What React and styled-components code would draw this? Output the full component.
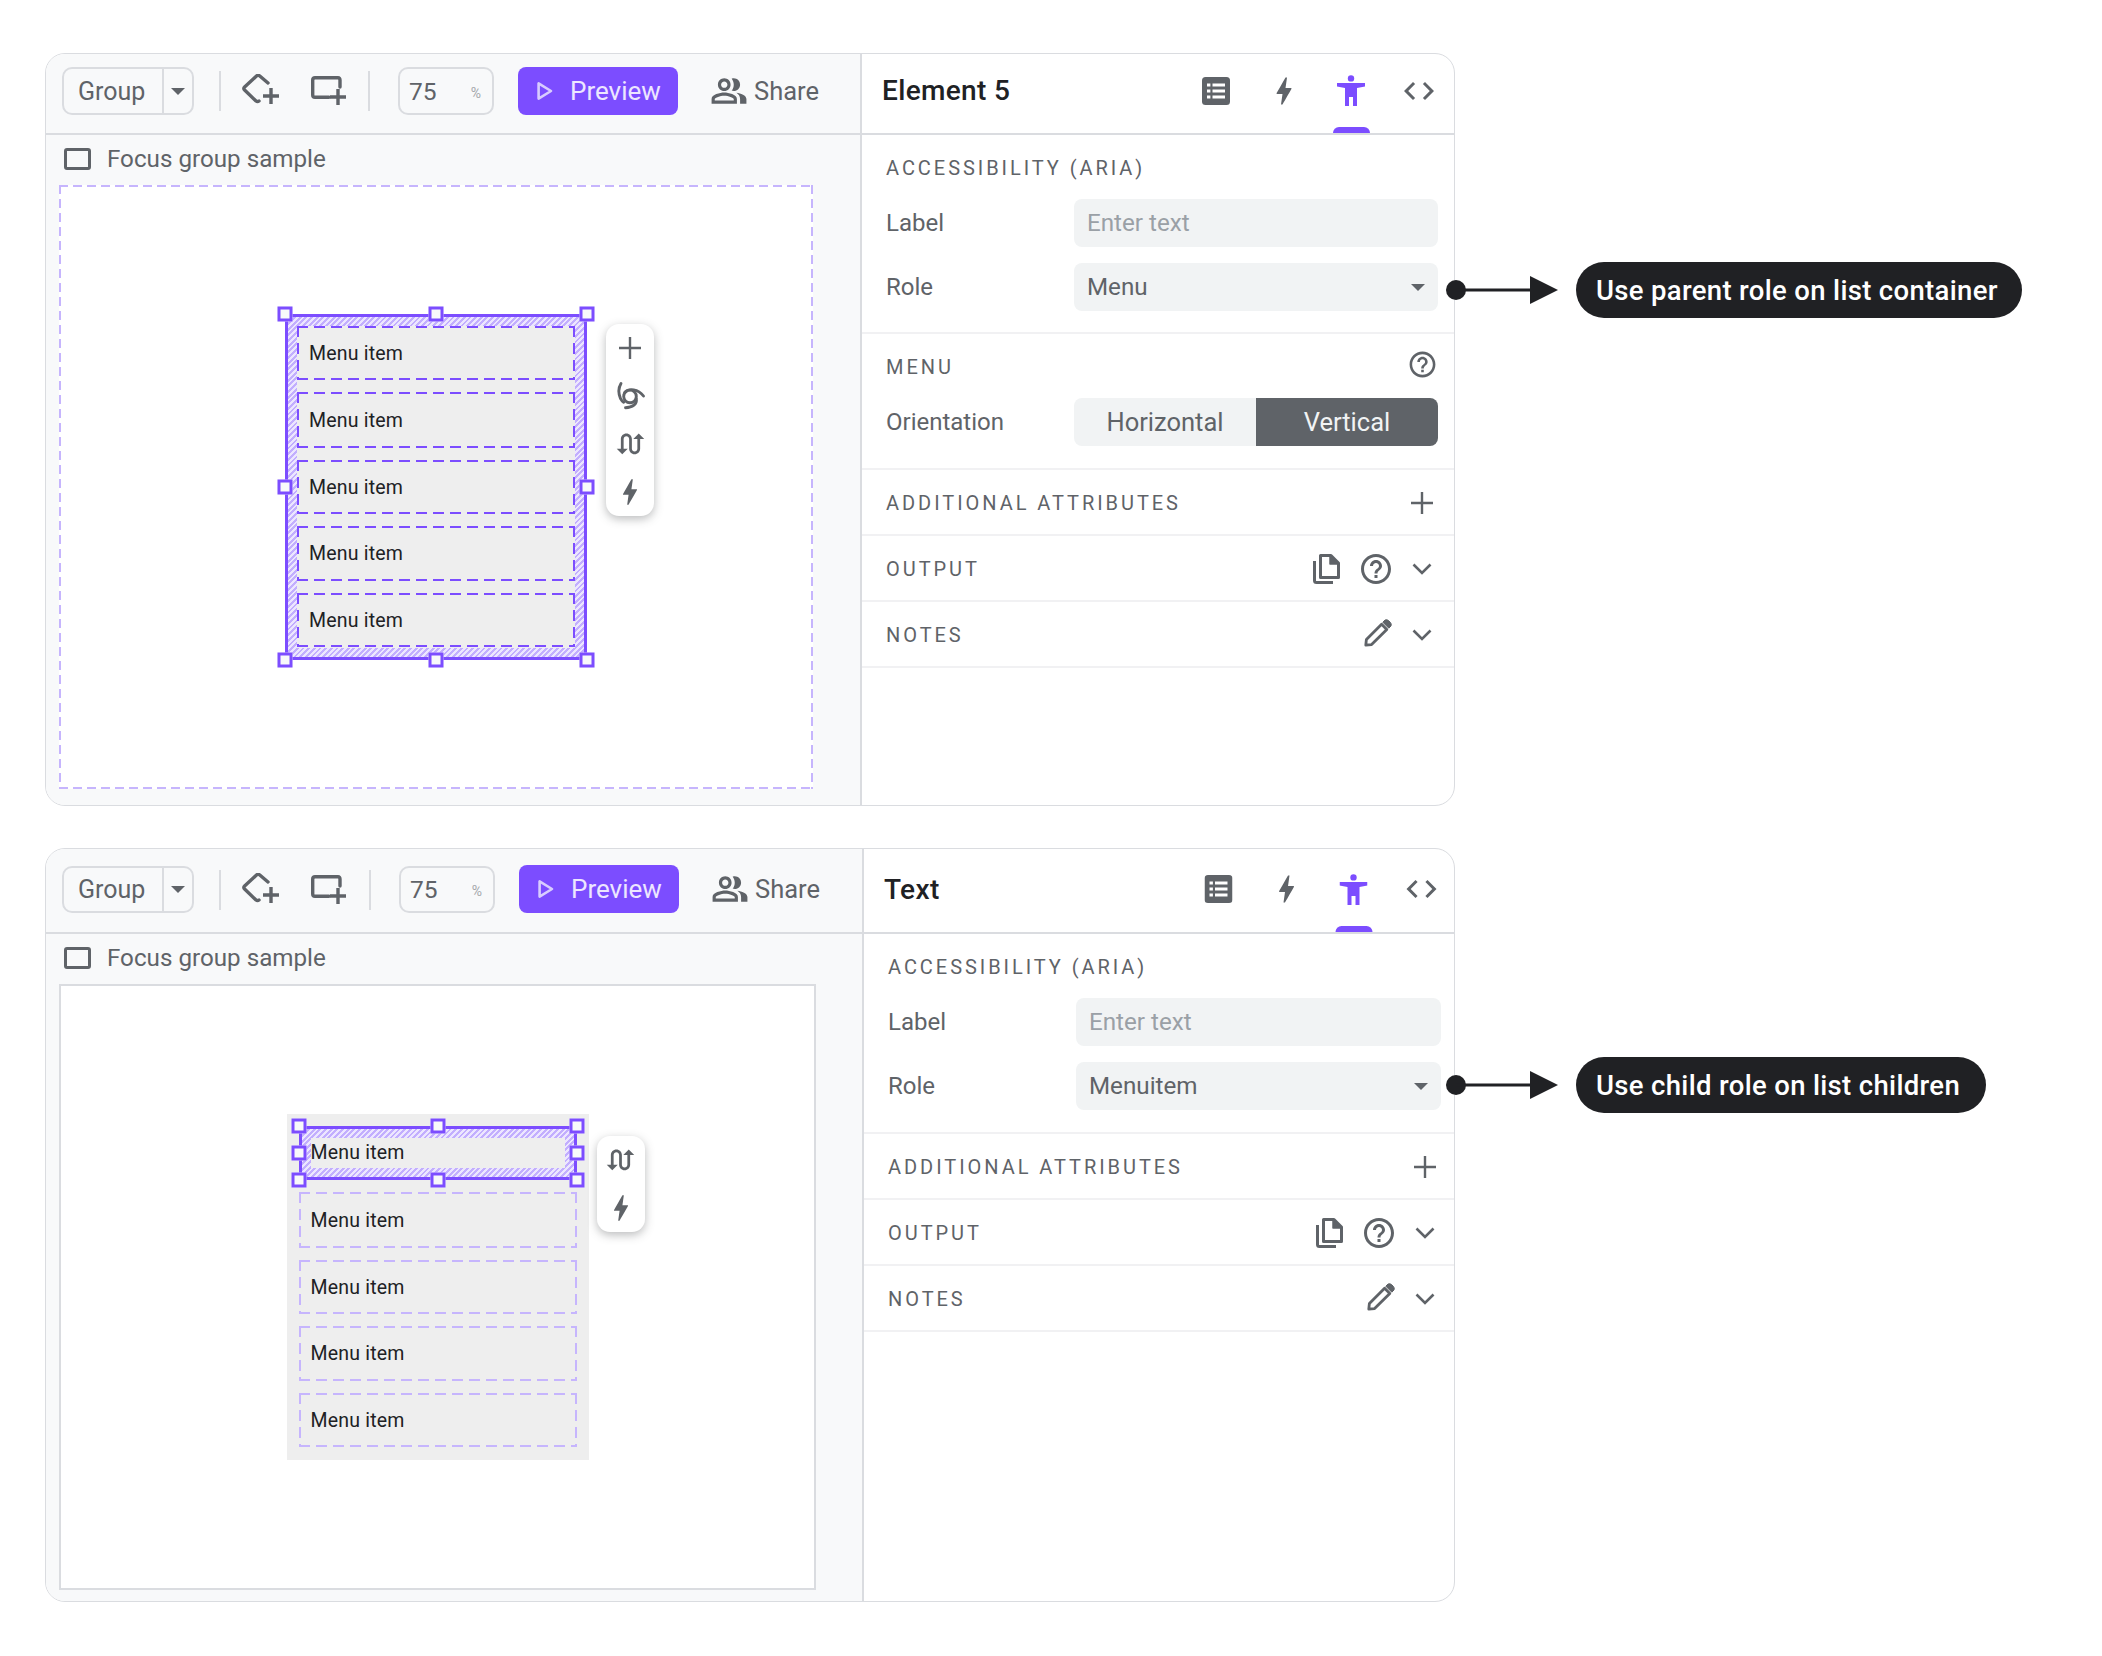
import React from "react";
import styled, { createGlobalStyle, css } from "styled-components";

const purple = "#7c4dff";
const lilac = "#c6b5fd";
const grey = "#5f6368";
const line = "#dadce0";
const softLine = "#f1f1f3";

const Global = createGlobalStyle`
  html, body { margin: 0; padding: 0; background: #fff; }
  body { font-family: Roboto, "Liberation Sans", sans-serif; color: ${grey}; width: 2102px; height: 1656px; overflow: hidden; }
  * { box-sizing: border-box; }
`;

const dashed = (c, w, d, g) => css`
  background-image:
    linear-gradient(to right, ${c} ${d}px, transparent ${d}px),
    linear-gradient(to right, ${c} ${d}px, transparent ${d}px),
    linear-gradient(to bottom, ${c} ${d}px, transparent ${d}px),
    linear-gradient(to bottom, ${c} ${d}px, transparent ${d}px);
  background-size: ${d + g}px ${w}px, ${d + g}px ${w}px, ${w}px ${d + g}px, ${w}px ${d + g}px;
  background-position: 0 0, 0 100%, 0 0, 100% 0;
  background-repeat: repeat-x, repeat-x, repeat-y, repeat-y;
`;

const hatch = css`
  background-image: repeating-linear-gradient(135deg, #c2aefe 0 2px, #ece6ff 2px 4px);
`;

const Page = styled.main`
  padding: 53px 0 0 45px;
  display: flex;
  flex-direction: column;
  gap: 42px;
`;

const Panel = styled.section`
  position: relative;
  width: 1410px;
  height: ${(p) => p.$height}px;
  display: flex;
  background: #fff;
  border: 1px solid ${line};
  border-radius: 20px;
`;

const LeftPane = styled.div`
  width: ${(p) => p.$width}px;
  flex: none;
  display: flex;
  flex-direction: column;
  background: #f8f9fa;
  border-right: 2px solid ${line};
  border-radius: 19px 0 0 19px;
  padding-bottom: ${(p) => p.$bottom}px;
`;

const Toolbar = styled.div`
  height: ${(p) => p.$height}px;
  flex: none;
  display: flex;
  align-items: flex-start;
  padding: ${(p) => p.$top}px 0 0 16px;
  border-bottom: 2px solid ${line};
`;

const GroupSelect = styled.div`
  width: 132px;
  height: ${(p) => p.$h}px;
  display: flex;
  border: 2px solid ${line};
  border-radius: 10px;
  font-size: 25px;
`;

const GroupName = styled.span`
  width: 100px;
  display: flex;
  align-items: center;
  padding-left: 14px;
  border-right: 2px solid ${line};
`;

const GroupCaret = styled.span`
  flex: 1;
  display: flex;
  align-items: center;
  justify-content: center;
`;

const Caret = styled.span`
  width: 0;
  height: 0;
  border-left: 7px solid transparent;
  border-right: 7px solid transparent;
  border-top: 7px solid ${grey};
`;

const ToolDivider = styled.span`
  width: 2px;
  height: 40px;
  margin: 4px ${(p) => p.$after}px 0 ${(p) => p.$before}px;
  background: ${line};
  flex: none;
`;

const ToolIcon = styled.svg`
  flex: none;
  margin: ${(p) => p.$top}px ${(p) => p.$right || 0}px 0 0;
  fill: none;
  stroke: ${grey};
  stroke-width: 3.4;
  stroke-linecap: round;
  stroke-linejoin: round;
`;

const ZoomBox = styled.div`
  width: 96px;
  height: ${(p) => p.$h}px;
  display: flex;
  align-items: center;
  justify-content: space-between;
  padding: 0 11px 0 9px;
  border: 2px solid ${line};
  border-radius: 10px;
  font-size: 24.5px;
  margin-right: 24px;
`;

const Percent = styled.span`
  font-size: 14px;
  color: #a4a7ab;
  margin-top: 3px;
`;

const PreviewButton = styled.button`
  width: 160px;
  height: 48px;
  margin-top: ${(p) => p.$nudge}px;
  display: flex;
  align-items: center;
  padding: 0 0 0 19px;
  gap: 17px;
  border: 0;
  border-radius: 8px;
  background: ${purple};
  color: #ece6ff;
  font: 400 26px Roboto, sans-serif;
`;

const ShareButton = styled.div`
  margin: ${(p) => p.$nudge}px 0 0 32px;
  height: 48px;
  display: flex;
  align-items: center;
  gap: 6px;
  font-size: 25.5px;
`;

const SampleRow = styled.div`
  height: 50px;
  flex: none;
  display: flex;
  align-items: center;
  gap: 16px;
  padding: 0 0 3px 18px;
  font-size: 24.2px;
`;

const CheckBox = styled.span`
  width: 27px;
  height: 22px;
  border: 3px solid ${grey};
  border-radius: 3px;
  flex: none;
`;

const Canvas = styled.div`
  margin-left: 13px;
  width: ${(p) => p.$width}px;
  flex: 1;
  display: flex;
  align-items: center;
  justify-content: center;
  background-color: #fff;
  ${(p) => (p.$focused ? dashed(lilac, 2, 9, 5) : css`border: 2px solid ${line};`)}
`;

const MenuFrame = styled.div`
  position: relative;
  width: 302px;
  height: 346px;
  padding: 12px 12px;
  display: flex;
  flex-direction: column;
  gap: 12px;
  background-color: #eeeeee;
  ${(p) =>
    p.$selected &&
    css`
      border: 3px solid ${purple};
      padding: 9px;
      &::before {
        content: "";
        position: absolute;
        inset: 0;
        border: 9px solid transparent;
        ${hatch}
        background-origin: border-box;
        -webkit-mask: linear-gradient(#000 0 0) border-box, linear-gradient(#000 0 0) padding-box;
        -webkit-mask-composite: xor;
        mask-composite: exclude;
      }
    `}
`;

const MenuItem = styled.div`
  position: relative;
  flex: none;
  height: ${(p) => p.$h}px;
  display: flex;
  align-items: center;
  padding-left: 12px;
  font-size: 19.5px;
  letter-spacing: 0.2px;
  color: #202124;
  ${(p) => dashed(p.$strong ? purple : lilac, 2, 11, 6)}
`;

const SelectedItem = styled.div`
  position: relative;
  flex: none;
  height: ${(p) => p.$h}px;
  padding: 9px 9px;
  border: 3px solid ${purple};
  font-size: 19.5px;
  letter-spacing: 0.2px;
  color: #202124;
  ${hatch}
`;

const SelectedText = styled.div`
  height: 30px;
  line-height: 30px;
  background: #eeeeee;
`;

const HandleLayer = styled.div`
  position: absolute;
  inset: -3px;
  pointer-events: none;
`;

const Handle = styled.span`
  position: absolute;
  left: ${(p) => p.$x}%;
  top: ${(p) => p.$y}%;
  width: 15px;
  height: 15px;
  transform: translate(-50%, -50%);
  background: #f8f9fa;
  border: 3px solid ${purple};
  z-index: 2;
`;

const FloatBar = styled.div`
  position: absolute;
  left: calc(100% + ${(p) => p.$gap}px);
  top: ${(p) => p.$top}px;
  width: 48px;
  display: flex;
  flex-direction: column;
  align-items: center;
  background: #fff;
  border-radius: 13px;
  box-shadow: 0 3px 10px rgba(60, 64, 67, 0.35);
`;

const FloatSlot = styled.span`
  width: 48px;
  height: 48px;
  display: flex;
  align-items: center;
  justify-content: center;
`;

const RightPane = styled.div`
  flex: 1;
  min-width: 0;
  display: flex;
  flex-direction: column;
`;

const Header = styled.header`
  height: ${(p) => p.$height}px;
  flex: none;
  display: flex;
  align-items: center;
  padding: 0 0 ${(p) => p.$pb}px 20px;
  border-bottom: 2px solid ${line};
`;

const Title = styled.h2`
  margin: 0;
  flex: 1;
  font-size: 28px;
  font-weight: 500;
  letter-spacing: 0.35px;
  color: #202124;
`;

const TabBar = styled.div`
  display: flex;
  transform: translateX(${(p) => p.$tx}px);
`;

const Tab = styled.span`
  position: relative;
  width: 67.7px;
  height: 40px;
  display: flex;
  align-items: center;
  justify-content: center;
`;

const Indicator = styled.span`
  position: absolute;
  left: 15px;
  bottom: ${(p) => p.$bottom}px;
  width: 37px;
  height: 6px;
  border-radius: 6px 6px 0 0;
  background: ${purple};
`;

const Section = styled.div`
  flex: none;
  height: ${(p) => p.$h}px;
  padding: 0 ${(p) => p.$right}px 0 24px;
  border-bottom: 2px solid ${softLine};
`;

const SectionHead = styled.div`
  height: ${(p) => p.$h}px;
  padding-top: 1.5px;
  display: flex;
  align-items: center;
  justify-content: space-between;
`;

const SectionTitle = styled.span`
  font-size: 20px;
  letter-spacing: 2.95px;
  white-space: nowrap;
`;

const HeadIcons = styled.div`
  display: flex;
  align-items: center;
`;

const HeadSlot = styled.span`
  width: ${(p) => p.$w}px;
  display: flex;
  align-items: center;
  justify-content: center;
  margin: ${(p) => p.$mt || 0}px ${(p) => p.$mr || 0}px 0 0;
`;

const MenuHelp = styled.span`
  display: block;
  margin-top: -5px;
`;

const Row = styled.div`
  height: 48px;
  display: flex;
  align-items: center;
  margin-bottom: 16px;
`;

const RowLabel = styled.span`
  width: 188px;
  flex: none;
  font-size: 24px;
`;

const Field = styled.div`
  flex: 1;
  height: 48px;
  display: flex;
  align-items: center;
  justify-content: space-between;
  padding: 0 13px;
  background: #f1f3f4;
  border-radius: 8px;
  font-size: 24.2px;
  color: ${(p) => (p.$placeholder ? "#9aa0a6" : grey)};
`;

const Segmented = styled.div`
  flex: 1;
  height: 48px;
  display: flex;
  border-radius: 8px;
  overflow: hidden;
  font-size: 25.5px;
`;

const Segment = styled.span`
  flex: 1;
  display: flex;
  align-items: center;
  justify-content: center;
  background: ${(p) => (p.$on ? grey : "#f1f3f4")};
  color: ${(p) => (p.$on ? "#f1f3f4" : grey)};
`;

const Annotation = styled.aside`
  position: absolute;
  left: 1400px;
  top: 208px;
  display: flex;
  align-items: center;
  gap: 18px;
`;

const Pill = styled.div`
  height: 56px;
  padding: 0 ${(p) => p.$pad}px 0 20px;
  display: flex;
  align-items: center;
  background: #202124;
  color: #fff;
  border-radius: 28px;
  font-size: 27.5px;
  font-weight: 500;
  letter-spacing: 0.33px;
  white-space: nowrap;
`;

const I = ({ size, d, color = grey }) => (
  <svg width={size} height={size} viewBox="0 0 24 24" fill={color} style={{ display: "block" }}>
    <path d={d} />
  </svg>
);

const paths = {
  bolt: "M11 21h-1l1-7H7.5c-.88 0-.33-.75-.31-.78C8.48 10.94 10.42 7.54 13.01 3h1l-1 7h3.51c.4 0 .62.19.4.66C12.97 17.55 11 21 11 21z",
  code: "M9.4 16.6L4.8 12l4.6-4.6L8 6l-6 6 6 6 1.4-1.4zm5.2 0l4.6-4.6-4.6-4.6L16 6l6 6-6 6-1.4-1.4z",
  help: "M11 18h2v-2h-2v2zm1-16C6.48 2 2 6.48 2 12s4.48 10 10 10 10-4.48 10-10S17.52 2 12 2zm0 18c-4.41 0-8-3.59-8-8s3.59-8 8-8 8 3.59 8 8-3.59 8-8 8zm0-14c-2.21 0-4 1.79-4 4h2c0-1.1.9-2 2-2s2 .9 2 2c0 2-3 1.75-3 5h2c0-2.25 3-2.5 3-5 0-2.21-1.79-4-4-4z",
  swap: "M18 4l-4 4h3v7c0 1.1-.9 2-2 2s-2-.9-2-2V8c0-2.21-1.79-4-4-4S5 5.79 5 8v7H2l4 4 4-4H7V8c0-1.1.9-2 2-2s2 .9 2 2v7c0 2.21 1.79 4 4 4s4-1.79 4-4V8h3l-4-4z",
  people: "M16.67 13.13C18.04 14.06 19 15.32 19 17v3h4v-3c0-2.18-3.57-3.47-6.33-3.87zM15 12c2.21 0 4-1.79 4-4s-1.79-4-4-4c-.47 0-.91.1-1.33.24C14.5 5.27 15 6.58 15 8s-.5 2.73-1.33 3.76c.42.14.86.24 1.33.24zM9 12c2.21 0 4-1.79 4-4s-1.79-4-4-4-4 1.79-4 4 1.79 4 4 4zm0-6c1.1 0 2 .9 2 2s-.9 2-2 2-2-.9-2-2 .9-2 2-2zm0 7c-2.67 0-8 1.34-8 4v3h16v-3c0-2.66-5.33-4-8-4zm6 5H3v-.99C3.2 16.29 6.3 15 9 15s5.8 1.29 6 2v1z",
};

const ShapePlus = () => (
  <ToolIcon $top={7} $right={31} width="38" height="30" viewBox="0 0 38 30">
    <path d="M26 9 L17.5 1.8 Q16 .8 14.5 2 L2.6 13 Q1 14.5 2.6 16 L14 27 Q15.5 28.2 17 27" />
    <path d="M29 14V30M21 22H37" strokeLinecap="butt" />
  </ToolIcon>
);

const RectPlus = () => (
  <ToolIcon $top={9} width="36" height="30" viewBox="0 0 36 30">
    <path d="M29 11V4Q29 1.7 27 1.7H4Q1.7 1.7 1.7 4V19Q1.7 21.3 4 21.3H18" />
    <path d="M27 13V29M19 21H35" strokeLinecap="butt" />
  </ToolIcon>
);

const PlayIcon = () => (
  <svg width="16" height="20" viewBox="0 0 16 20" fill="none" stroke="#d8ccff" strokeWidth="2.6" style={{ flex: "none" }}>
    <path d="M1.6 2.4V17.6L14 10Z" strokeLinejoin="round" />
  </svg>
);

const ListIcon = () => (
  <svg width="28" height="28" viewBox="0 0 28 28" style={{ display: "block" }}>
    <rect width="28" height="28" rx="3.5" fill={grey} />
    <path d="M5 6.5h3.4v3H5zM5 12.5h3.4v3H5zM5 18.5h3.4v3H5zM10.5 6.5H23v3H10.5zM10.5 12.5H23v3H10.5zM10.5 18.5H23v3H10.5z" fill="#fff" />
  </svg>
);

const PersonIcon = () => (
  <svg width="28" height="31" viewBox="0 0 28 31" fill={purple} style={{ display: "block" }}>
    <circle cx="14" cy="3.4" r="3.2" />
    <path d="M0 8H28V11.5L20 13V31H16V22H12V31H8V13L0 11.5Z" />
  </svg>
);

const CycloneIcon = () => (
  <svg width="36" height="36" viewBox="0 0 40 40" fill="none" stroke={grey} strokeWidth="3.2" strokeLinecap="round" style={{ display: "block" }}>
    <circle cx="20" cy="20.5" r="7" />
    <path d="M10 6C7 11 7 17 9.5 23C10.5 25 11.5 26 13 27" />
    <path d="M14 16C19 11 29 12 35 20" />
    <path d="M27 23C28 29 23 33 15 33" />
  </svg>
);

const CopyIcon = () => (
  <svg width="27" height="30" viewBox="0 0 27 30" fill="none" stroke={grey} strokeWidth="3" strokeLinejoin="round" style={{ display: "block", marginRight: 18 }}>
    <path d="M7.5 1.5H18L25.5 9V23.5H7.5Z" />
    <path d="M17 1.5V10H25.5Z" fill={grey} strokeWidth="1.5" />
    <path d="M1.5 7V26.5Q1.5 28.5 3.5 28.5H20" />
  </svg>
);

const PencilIcon = () => (
  <svg width="28" height="28" viewBox="0 0 28 28" fill="none" stroke={grey} strokeWidth="2.8" strokeLinejoin="round" style={{ display: "block" }}>
    <path d="M1.8 26.2L2.4 20.4L17.6 5.2L22.8 10.4L7.6 25.6Z" />
    <path d="M18.8 3.2L21 1Q23 .2 24.6 1.6L26.4 3.4Q27.8 5 27 7L24.8 9.2Z" fill={grey} strokeWidth="1" />
  </svg>
);

const Chevron = () => (
  <svg width="20" height="12" viewBox="0 0 20 12" fill="none" stroke={grey} strokeWidth="2.6" style={{ display: "block" }}>
    <path d="M1.5 1.5L10 10L18.5 1.5" />
  </svg>
);

const PlusIcon = () => (
  <svg width="22" height="22" viewBox="0 0 22 22" fill="none" stroke={grey} strokeWidth="2.4" style={{ display: "block" }}>
    <path d="M11 0V22M0 11H22" />
  </svg>
);

const Connector = () => (
  <svg width="112" height="28" viewBox="0 0 112 28" style={{ display: "block" }}>
    <ellipse cx="10" cy="14" rx="10" ry="10" fill="#202124" />
    <path d="M10 12.5H86V15.5H10Z" fill="#202124" />
    <path d="M84 0L112 14L84 28Z" fill="#202124" />
  </svg>
);

const HEIGHTS = [54, 56, 54, 55, 54];
const ALL_HANDLES = [[0, 0], [50, 0], [100, 0], [0, 50], [100, 50], [0, 100], [50, 100], [100, 100]];

const Handles = () => (
  <HandleLayer>
    {ALL_HANDLES.map(([x, y]) => <Handle key={`${x}-${y}`} $x={x} $y={y} />)}
  </HandleLayer>
);

const FoldRow = ({ title, right, children }) => (
  <Section $h={66} $right={right}>
    <SectionHead $h={64}>
      <SectionTitle>{title}</SectionTitle>
      <HeadIcons>{children}</HeadIcons>
    </SectionHead>
  </Section>
);

const Editor = ({ v }) => (
  <Panel $height={v.height}>
    <LeftPane $width={v.leftWidth} $bottom={v.leftBottom}>
      <Toolbar $height={v.toolbarH} $top={v.toolTop}>
        <GroupSelect $h={v.ctlH}>
          <GroupName>Group</GroupName>
          <GroupCaret><Caret /></GroupCaret>
        </GroupSelect>
        <ToolDivider $before={25} $after={21} />
        <ShapePlus />
        <RectPlus />
        <ToolDivider $before={v.divBefore} $after={28} />
        <ZoomBox $h={v.ctlH}>
          <span>75</span>
          <Percent>%</Percent>
        </ZoomBox>
        <PreviewButton $nudge={v.nudge}>
          <PlayIcon />
          <span>Preview</span>
        </PreviewButton>
        <ShareButton $nudge={v.nudge}>
          <I size={38} d={paths.people} />
          <span>Share</span>
        </ShareButton>
      </Toolbar>
      <SampleRow>
        <CheckBox />
        <span>Focus group sample</span>
      </SampleRow>
      <Canvas $focused={v.mode === "parent"} $width={v.canvasW}>
        <MenuFrame $selected={v.mode === "parent"}>
          {HEIGHTS.map((h, i) =>
            v.mode === "child" && i === 0 ? (
              <SelectedItem key={i} $h={h}>
                <SelectedText>Menu item</SelectedText>
                <Handles />
              </SelectedItem>
            ) : (
              <MenuItem key={i} $h={h} $strong={v.mode === "parent"}>Menu item</MenuItem>
            )
          )}
          {v.mode === "parent" ? (
            <>
              <Handles />
              <FloatBar $gap={22} $top={7}>
                <FloatSlot><PlusIcon /></FloatSlot>
                <FloatSlot><CycloneIcon /></FloatSlot>
                <FloatSlot><I size={33} d={paths.swap} /></FloatSlot>
                <FloatSlot><I size={34} d={paths.bolt} /></FloatSlot>
              </FloatBar>
            </>
          ) : (
            <FloatBar $gap={8} $top={22}>
              <FloatSlot><I size={33} d={paths.swap} /></FloatSlot>
              <FloatSlot><I size={34} d={paths.bolt} /></FloatSlot>
            </FloatBar>
          )}
        </MenuFrame>
      </Canvas>
    </LeftPane>
    <RightPane>
      <Header $height={v.toolbarH} $pb={v.headerPb}>
        <Title>{v.title}</Title>
        <TabBar $tx={v.tabShift}>
          <Tab><ListIcon /></Tab>
          <Tab><I size={36} d={paths.bolt} /></Tab>
          <Tab>
            <PersonIcon />
            <Indicator $bottom={v.indicator} />
          </Tab>
          <Tab><I size={36} d={paths.code} /></Tab>
        </TabBar>
      </Header>
      <Section $h={v.ariaH} $right={v.fieldRight}>
        <SectionHead $h={64}>
          <SectionTitle>ACCESSIBILITY (ARIA)</SectionTitle>
        </SectionHead>
        <Row>
          <RowLabel>Label</RowLabel>
          <Field $placeholder>Enter text</Field>
        </Row>
        <Row>
          <RowLabel>Role</RowLabel>
          <Field>
            <span>{v.role}</span>
            <Caret />
          </Field>
        </Row>
      </Section>
      {v.mode === "parent" && (
        <Section $h={136} $right={v.fieldRight}>
          <SectionHead $h={64}>
            <SectionTitle>MENU</SectionTitle>
            <MenuHelp><I size={31} d={paths.help} /></MenuHelp>
          </SectionHead>
          <Row>
            <RowLabel>Orientation</RowLabel>
            <Segmented>
              <Segment>Horizontal</Segment>
              <Segment $on>Vertical</Segment>
            </Segmented>
          </Row>
        </Section>
      )}
      <FoldRow title="ADDITIONAL ATTRIBUTES" right={v.fieldRight}>
        <HeadSlot $w={24} $mr={4}><PlusIcon /></HeadSlot>
      </FoldRow>
      <FoldRow title="OUTPUT" right={v.fieldRight}>
        <CopyIcon />
        <HeadSlot $w={36} $mr={14}><I size={36} d={paths.help} /></HeadSlot>
        <HeadSlot $w={28} $mr={2}><Chevron /></HeadSlot>
      </FoldRow>
      <FoldRow title="NOTES" right={v.fieldRight}>
        <HeadSlot $w={34} $mr={13} $mt={-3}><PencilIcon /></HeadSlot>
        <HeadSlot $w={28} $mr={2}><Chevron /></HeadSlot>
      </FoldRow>
    </RightPane>
    <Annotation>
      <Connector />
      <Pill $pad={v.pillPad}>{v.note}</Pill>
    </Annotation>
  </Panel>
);

const variants = [
  {
    mode: "parent", height: 753, leftWidth: 816, leftBottom: 16, toolbarH: 81, toolTop: 13, ctlH: 48, nudge: 0,
    divBefore: 21, canvasW: 754, title: "Element 5", headerPb: 6, tabShift: -1, indicator: -22.5, ariaH: 199,
    fieldRight: 16, role: "Menu", note: "Use parent role on list container", pillPad: 24,
  },
  {
    mode: "child", height: 754, leftWidth: 818, leftBottom: 11, toolbarH: 85, toolTop: 17, ctlH: 47, nudge: -1,
    divBefore: 22, canvasW: 757, title: "Text", headerPb: 3, tabShift: 1.5, indicator: -23, ariaH: 200,
    fieldRight: 13, role: "Menuitem", note: "Use child role on list children", pillPad: 26,
  },
];

export default function App() {
  return (
    <>
      <Global />
      <Page>
        {variants.map((v) => <Editor key={v.mode} v={v} />)}
      </Page>
    </>
  );
}
